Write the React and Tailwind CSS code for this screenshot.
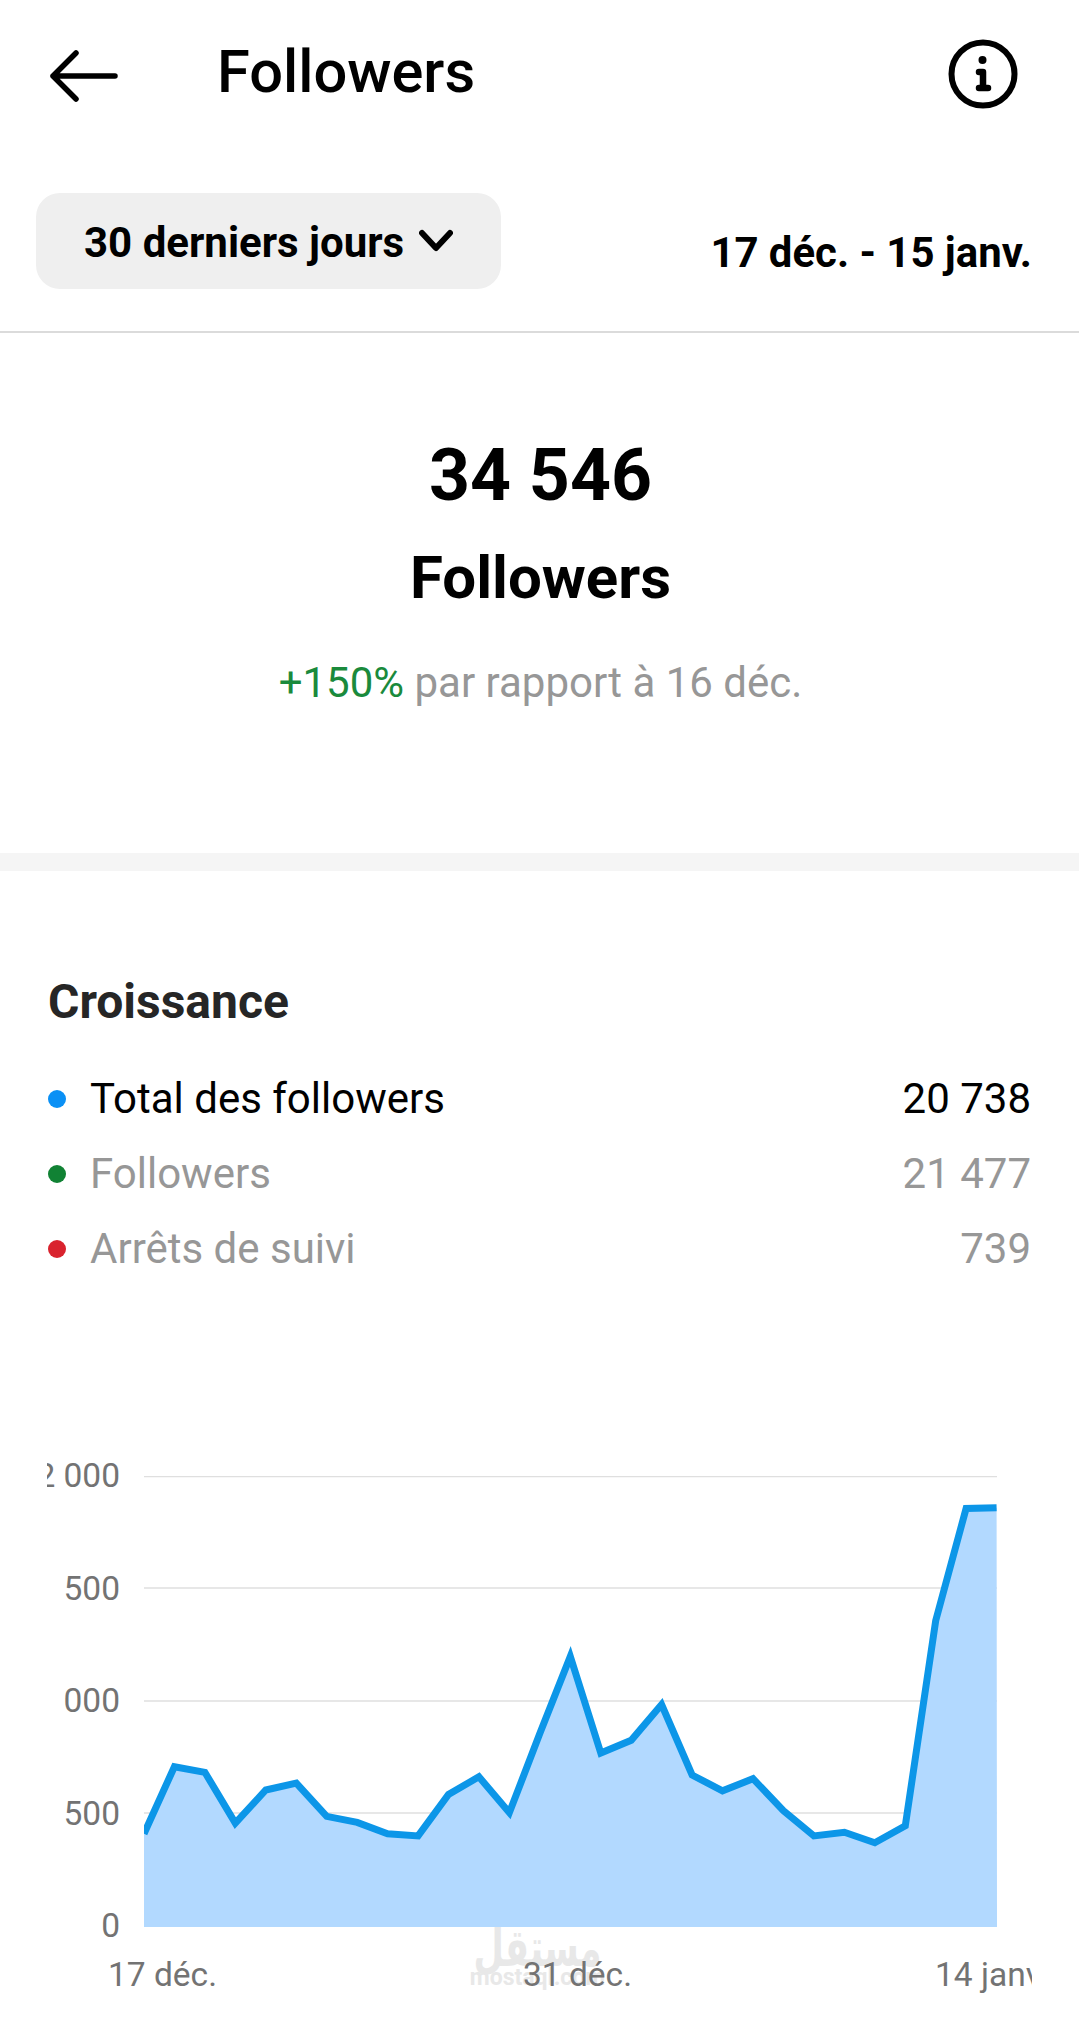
const ys = [1046, 868, 883, 1018, 930, 912, 1000, 1016, 1046, 1052, 942, 895, 990, 780, 575, 832, 798, 703, 890, 932, 900, 985, 1052, 1042, 1070, 1025, 480, 182, 180];
const CH = 1440;
const top = 1476;
const pts = ys.map((py, i) => [i * 30.45, CH + py / 2.657 - top]);
const line = pts.map(p => `${p[0].toFixed(1)},${p[1].toFixed(1)}`).join(' ');
const H = 451;
const W = 853;
const area = `0,${H} ${line} ${W},${H}`;

const rows = [
  { c: 'bg-[#0a90f5]', t: 'text-black', l: 'Total des followers', v: '20 738' },
  { c: 'bg-[#118234]', t: 'text-[#979797]', l: 'Followers', v: '21 477' },
  { c: 'bg-[#d9232e]', t: 'text-[#979797]', l: 'Arrêts de suivi', v: '739' },
];

export default function App() {
  return (
    <div className="relative w-[1079px] h-[2030px] bg-white overflow-hidden font-['Roboto',sans-serif] text-black">
      <header className="flex items-center h-[152px] pl-[49px] pr-[61px]">
        <svg width="70" height="52" viewBox="0 0 70 52" fill="none" stroke="black" strokeWidth="5.5" strokeLinecap="round" strokeLinejoin="round">
          <path d="M66 26H4M27 3 4 26l23 23" />
        </svg>
        <h1 className="ml-[98px] mb-[7px] text-[59.6px] leading-none font-medium">Followers</h1>
        <svg className="ml-auto mb-[5px]" width="70" height="70" viewBox="0 0 70 70" fill="none" stroke="black">
          <circle cx="35" cy="35" r="31.5" strokeWidth="6" />
          <circle cx="34.5" cy="21" r="4" fill="black" stroke="none" />
          <path d="M31 33h4v16M31 49h9" strokeWidth="6.5" strokeLinecap="round" strokeLinejoin="round" />
        </svg>
      </header>

      <div className="flex items-start justify-between pl-[36px] pr-[47px] mt-[41px]">
        <button className="flex items-center w-[465px] h-[96px] pl-[48px] rounded-[24px] bg-[#efefef] text-[42px] font-bold">
          <span className="pt-[3px]">30 derniers jours</span>
          <svg className="ml-[15px]" width="34" height="24" viewBox="0 0 34 24" fill="none" stroke="black" strokeWidth="6" strokeLinecap="round" strokeLinejoin="round">
            <path d="M3 4l14 15L31 4" />
          </svg>
        </button>
        <div className="mt-[34px] text-[41.9px] leading-[52px] font-bold">17 déc. - 15 janv.</div>
      </div>

      <div className="mt-[42px] h-[2px] bg-[#dbdbdb]" />

      <section className="flex flex-col items-center h-[520px] pt-[105px] pl-[2px]">
        <div className="text-[71.5px] leading-[76px] font-bold">34 546</div>
        <div className="mt-[30px] text-[60px] leading-[68px] font-bold">Followers</div>
        <div className="mt-[47px] text-[42px] leading-[48px] text-[#979797]"><span className="text-[#1a8a3c]">+150%</span> par rapport à 16 déc.</div>
      </section>

      <div className="h-[18px] bg-[#f5f5f5]" />

      <section className="pl-[48px] pr-[48px] pt-[104px]">
        <h2 className="text-[48px] leading-[54px] font-bold text-[#262626]">Croissance</h2>
        <div className="mt-[32px] flex flex-col">
          {rows.map(r => (
            <div key={r.l} className="flex items-center h-[75px]">
              <span className={`w-[18px] h-[18px] rounded-full ${r.c}`} />
              <span className={`ml-[24px] text-[42px] ${r.t}`}>{r.l}</span>
              <span className={`ml-auto text-[42px] ${r.t}`}>{r.v}</span>
            </div>
          ))}
        </div>
      </section>

      <section className="relative ml-[47px] mt-[170px] w-[985px] overflow-hidden text-[33.5px] leading-[40px] text-[#737373]">
        <div className="absolute left-[428px] top-[472px] w-[125px] flex flex-col items-center text-[#e8e8e8] font-bold">
          <span className="text-[35px] leading-[40px] scale-y-[1.5] font-['DejaVu_Sans',sans-serif]">مستقل</span>
          <span className="mt-[-2px] text-[23px] leading-[24px]">mostaql.com</span>
        </div>
        <div className="relative flex">
          <div className="flex flex-col justify-between items-end w-[73px] h-[490px] shrink-0">
            {['2 000', '500', '000', '500', '0'].map((t, i) => (
              <div key={i} className="flex justify-end whitespace-nowrap">{t}</div>
            ))}
          </div>
          <svg className="ml-[24px] mt-[20px]" width="853" height="451" viewBox="0 0 853 451" fill="none">
            {[0.5, 112, 225, 337].map(y => (
              <line key={y} x1="0" x2="853" y1={y} y2={y} stroke="#dfdfdf" strokeWidth="1.5" />
            ))}
            <polygon points={area} fill="#b2d9ff" />
            <polyline points={line} stroke="#0c96e8" strokeWidth="7" strokeLinejoin="miter" />
          </svg>
        </div>
        <div className="relative flex mt-[9px] whitespace-nowrap">
          <span className="ml-[61px]">17 déc.</span>
          <span className="ml-[306px]">31 déc.</span>
          <span className="ml-[303px]">14 janv.</span>
        </div>
      </section>
    </div>
  );
}
